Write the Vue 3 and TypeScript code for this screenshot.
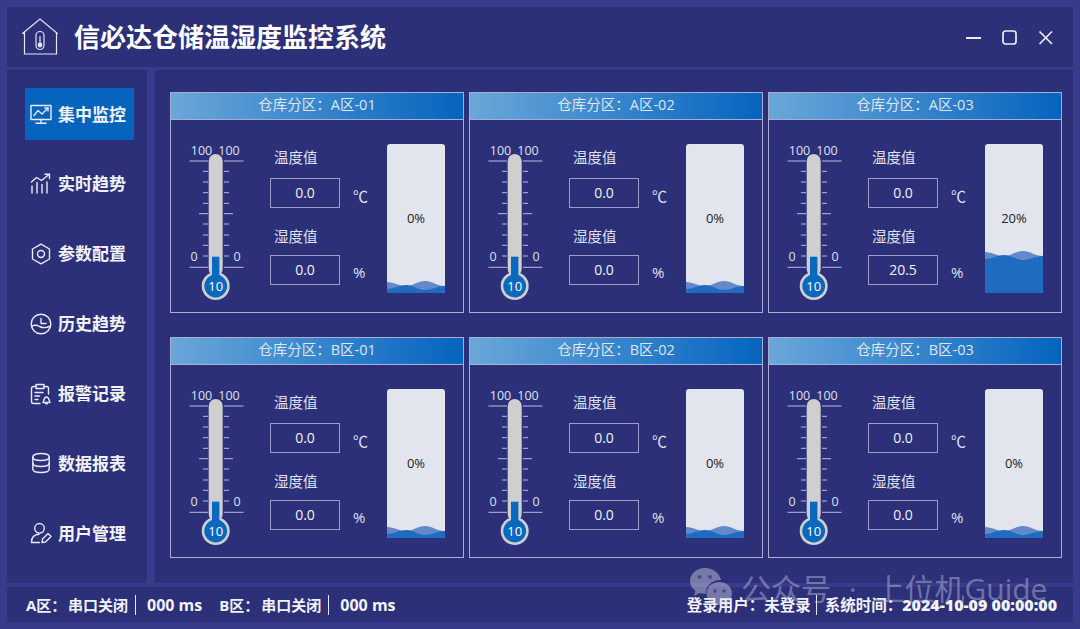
<template>
  <div class="app">
    <header class="titlebar">
      <svg class="logo" viewBox="0 0 36 37" fill="none" stroke="#e4e6f3" stroke-width="1.200">
        <path d="M.5 15.500 18 1 35.500 15.500H34.500" />
        <path d="M2.500 14V36H34.500V14" />
        <path d="M.5 15.500H2.500" />
        <rect x="14" y="13.500" width="8" height="18" rx="4" />
        <circle cx="18" cy="27" r="1.800" fill="#e4e6f3" />
        <path d="M18 26V18" />
      </svg>
      <h1 class="title">信必达仓储温湿度监控系统</h1>
      <div class="controls">
        <svg width="16" height="16" viewBox="0 0 16 16" stroke="#eceef8" stroke-width="2" fill="none"><path d="M0 8H15" /></svg>
        <svg width="16" height="16" viewBox="0 0 16 16" stroke="#eceef8" stroke-width="1.700" fill="none"><rect x="1" y="1" width="13" height="13" rx="2.500" /></svg>
        <svg width="16" height="16" viewBox="0 0 16 16" stroke="#eceef8" stroke-width="1.700" fill="none"><path d="M1.500 1.500 14 14M14 1.500 1.500 14" /></svg>
      </div>
    </header>

    <div class="middle">
      <nav class="sidebar">
        <a v-for="item in navItems" :key="item.label" class="nav-item" :class="{ active: item.active }">
          <svg class="nav-icon" viewBox="0 0 22 22" fill="none" stroke="#e8eaf6" stroke-width="1.400" stroke-linecap="round" stroke-linejoin="round">
            <path v-for="(d, i) in item.paths" :key="i" :d="d" />
          </svg>
          <span>{{ item.label }}</span>
        </a>
      </nav>

      <main class="content">
        <section v-for="card in cards" :key="card.name" class="card">
          <div class="card-head">仓库分区：{{ card.name }}</div>
          <div class="card-body">
            <svg class="thermo" width="56" height="160" viewBox="0 0 56 160">
              <g stroke="#b9bcdc" stroke-width="1">
                <line v-for="t in ticks" :key="t.y + 'l'" :x1="t.x1" :y1="t.y" x2="20" :y2="t.y" />
                <line v-for="t in ticks" :key="t.y + 'r'" x1="36" :y1="t.y" :x2="t.x2" :y2="t.y" />
              </g>
              <text x="13.500" y="13" class="scale">100</text>
              <text x="41" y="13" class="scale">100</text>
              <text x="6" y="119" class="scale">0</text>
              <text x="49" y="119" class="scale">0</text>
              <rect x="20.700" y="12" width="14" height="122" rx="7" fill="#cfcfcf" />
              <circle cx="27.700" cy="144" r="12.700" fill="#0a68bf" stroke="#cfcfcf" stroke-width="2.600" />
              <rect x="24" y="114.700" width="7.400" height="22" fill="#0a68bf" />
              <text x="27.700" y="148.600" class="bulb">10</text>
            </svg>

            <div class="fields">
              <div class="field-label">温度值</div>
              <div class="field-row">
                <div class="value-box">0.0</div>
                <span class="unit">℃</span>
              </div>
              <div class="field-label second">湿度值</div>
              <div class="field-row">
                <div class="value-box">{{ card.humidity }}</div>
                <span class="unit">%</span>
              </div>
            </div>

            <div class="tank">
              <svg class="water" width="58" height="149" viewBox="0 0 58 149" preserveAspectRatio="none">
                <path :d="backWave(card.level)" fill="#6289c9" />
                <path :d="frontWave(card.level)" fill="#1f6bbf" />
              </svg>
              <span class="percent">{{ card.level }}%</span>
            </div>
          </div>
        </section>
      </main>
    </div>

    <footer class="statusbar">
      <span class="zone">A区：</span><span>串口关闭</span>
      <i class="sep"></i>
      <span class="ms">000 ms</span>
      <span class="zone zone-b">B区：</span><span>串口关闭</span>
      <i class="sep"></i>
      <span class="ms">000 ms</span>
      <span class="user">登录用户：未登录</span>
      <i class="sep right"></i>
      <span class="clock">系统时间：<b>2024-10-09 00:00:00</b></span>
    </footer>

    <div class="watermark">
      <svg width="44" height="44" viewBox="0 0 44 44" fill="#dfe1ee">
        <path d="M16 1C7.500 1 1 6.800 1 14c0 4 2 7.400 5.400 9.800L5 29l5.600-3c1.600.5 3.200.8 5 .8.300 0 .8 0 1.200 0C16.500 18 24 12.500 32 13 30.500 6 24 1 16 1Z" />
        <path d="M30.500 15C23 15 17.500 20 17.500 26.500S23 38 30.500 38c1.500 0 2.800-.2 4-.6L39.500 40l-1.200-4.300C41.200 33.600 43 30.300 43 26.500 43 20 37.500 15 30.500 15Z" />
        <g fill="#6a6da6">
          <circle cx="10.500" cy="10" r="2" /><circle cx="21" cy="10" r="2" />
          <circle cx="26" cy="24" r="1.700" /><circle cx="35" cy="24" r="1.700" />
        </g>
      </svg>
      <span class="mark-text">公众号 · 上位机Guide</span>
    </div>
  </div>
</template>

<script setup lang="ts">
interface NavItem {
  label: string
  paths: string[]
  active?: boolean
}

const navItems: NavItem[] = [
  {
    label: '集中监控',
    active: true,
    paths: [
      'M1 2.500H21V16.500H1Z',
      'M4 12.500 8 7.500 12 11 18 5',
      'M14.800 5H18V8',
      'M11 16.500V20M6 20.300H16',
    ],
  },
  {
    label: '实时趋势',
    paths: [
      'M2 20V13M7 20V9.500M12 20V11.500M17 20V9',
      'M1.500 9 6.500 4.500 11.500 7.500 19 1.500',
      'M15 1.300H19.500V5.500',
    ],
  },
  {
    label: '参数配置',
    paths: [
      'M11 1.200 19.500 6V16L11 20.800 2.500 16V6Z',
      'M11 7.500A3.500 3.500 0 1 0 11 14.500 3.500 3.500 0 1 0 11 7.500Z',
    ],
  },
  {
    label: '历史趋势',
    paths: [
      'M11 1.200A9.800 9.800 0 1 0 11 20.800 9.800 9.800 0 1 0 11 1.200Z',
      'M11 5.500V10.500H16',
      'M1.500 13.500C4.500 11.500 7 12 9.500 13.500 12.500 15 16.500 15 20.500 13',
    ],
  },
  {
    label: '报警记录',
    paths: [
      'M6 3.500H3.500A2 2 0 0 0 1.500 5.500V18.500A2 2 0 0 0 3.500 20.500H10',
      'M14 3.500H16.500A2 2 0 0 1 18.500 5.500V11',
      'M6 1.500H14V5.500H6Z',
      'M5 9.500H13M5 13H9.500M5 16.500H8',
      'M13 19.500C14 18 13.800 14 16.500 14S19 18 20 19.500Z',
      'M15.800 20.800H17.200',
    ],
  },
  {
    label: '数据报表',
    paths: [
      'M11 1.500C6 1.500 2.800 3 2.800 5S6 8.500 11 8.500 19.200 7 19.200 5 16 1.500 11 1.500Z',
      'M2.800 5V17C2.800 19 6 20.500 11 20.500S19.200 19 19.200 17V5',
      'M2.800 11C2.800 13 6 14.500 11 14.500S19.200 13 19.200 11',
    ],
  },
  {
    label: '用户管理',
    paths: [
      'M9.500 1.500A4.800 4.800 0 1 0 9.500 11.100 4.800 4.800 0 1 0 9.500 1.500Z',
      'M1.500 20.500C1.500 15.500 4 12.500 9 12.300',
      'M1.500 20.500H9.500',
      'M12 20.500 12.500 17 18 11.500 21 14.500 15.500 20Z',
    ],
  },
]

const cards = [
  { name: 'A区-01', humidity: '0.0', level: 0 },
  { name: 'A区-02', humidity: '0.0', level: 0 },
  { name: 'A区-03', humidity: '20.5', level: 20 },
  { name: 'B区-01', humidity: '0.0', level: 0 },
  { name: 'B区-02', humidity: '0.0', level: 0 },
  { name: 'B区-03', humidity: '0.0', level: 0 },
]

// scale ticks of the thermometer
const ticks = [
  { y: 19, x1: 1.500, x2: 55.500 },
  { y: 29.300, x1: 15, x2: 41 },
  { y: 40, x1: 15, x2: 41 },
  { y: 50.700, x1: 15, x2: 41 },
  { y: 61.300, x1: 15, x2: 41 },
  { y: 71.700, x1: 11, x2: 45 },
  { y: 82, x1: 15, x2: 41 },
  { y: 93, x1: 15, x2: 41 },
  { y: 103.300, x1: 15, x2: 41 },
  { y: 114, x1: 15, x2: 41 },
  { y: 125.300, x1: 1.500, x2: 55.500 },
]

const baseY = (level: number) => 140 - level * 1.5

const backWave = (level: number) => {
  const y = baseY(level)
  return `M0 ${y - 2}C7 ${y - 2} 12 ${y + 2} 19 ${y + 2}S31 ${y - 3} 38 ${y - 3}S50 ${y + 2} 58 ${y + 2}V149H0Z`
}

const frontWave = (level: number) => {
  const y = baseY(level)
  return `M0 ${y + 5}C7 ${y + 5} 12 ${y + 1} 19 ${y + 1}S31 ${y + 6} 38 ${y + 6}S50 ${y + 2} 58 ${y + 2}V149H0Z`
}
</script>

<style>
html,
body {
  margin: 0;
  background: #383a8c;
}
</style>

<style scoped>
.app {
  position: relative;
  width: 1080px;
  height: 629px;
  box-sizing: border-box;
  padding: 7px;
  background: #383a8c;
  font-family: "Open Sans", "Noto Sans CJK SC", sans-serif;
  color: #e6e8f4;
  overflow: hidden;
}

.titlebar {
  display: flex;
  align-items: center;
  width: 1066px;
  height: 60px;
  padding-left: 15px;
  box-sizing: border-box;
  background: #2c3078;
}

.logo {
  width: 36px;
  height: 37px;
  margin-bottom: 1px;
}

.title {
  margin: 0 0 3px 16px;
  font-size: 26px;
  font-weight: 700;
  color: #fff;
}

.controls {
  display: flex;
  gap: 20px;
  margin: 2px 19px 0 auto;
}

.middle {
  display: flex;
  gap: 8px;
  margin-top: 3px;
  height: 513px;
}

.sidebar {
  width: 140px;
  box-sizing: border-box;
  padding: 18px 13px 0 18px;
  display: flex;
  flex-direction: column;
  gap: 17.900px;
  background: #2c3078;
}

.nav-item {
  display: flex;
  align-items: center;
  gap: 6px;
  height: 52px;
  flex: none;
  padding-left: 5px;
  font-size: 17px;
  font-weight: 700;
  color: #f1f2fa;
}

.nav-item span {
  padding-bottom: 2px;
}

.nav-item.active {
  background: #0664bd;
}

.nav-icon {
  width: 22px;
  height: 22px;
  flex: none;
}

.content {
  width: 918px;
  box-sizing: border-box;
  padding: 22px 11px 25px 15px;
  display: grid;
  grid-template-columns: repeat(3, 294px);
  grid-template-rows: repeat(2, 221px);
  column-gap: 5px;
  row-gap: 24px;
  background: #2c3078;
}

.card {
  box-sizing: border-box;
  border: 1px solid #a9add4;
  background: #2c3078;
}

.card-head {
  height: 26px;
  line-height: 23px;
  text-align: center;
  font-size: 14.500px;
  color: #dfe6f5;
  background: linear-gradient(90deg, #6aa7d9, #0564bf);
  border-bottom: 1px solid #a9add4;
}

.card-body {
  display: flex;
  align-items: flex-start;
  padding: 22px 18px 0 17px;
}

.thermo {
  flex: none;
}

.scale {
  fill: #dfe1f0;
  font-size: 12.500px;
  text-anchor: middle;
}

.bulb {
  fill: #fff;
  font-size: 13px;
  text-anchor: middle;
}

.fields {
  margin: 5px 0 0 26px;
}

.field-label {
  height: 22px;
  line-height: 22px;
  margin-left: 4px;
  font-size: 14.500px;
  color: #dfe1f0;
}

.field-label.second {
  margin-top: 18px;
}

.field-row {
  display: flex;
  align-items: center;
  margin-top: 9px;
}

.field-label.second + .field-row {
  margin-top: 7px;
}

.value-box {
  width: 70px;
  height: 30px;
  box-sizing: border-box;
  border: 1px solid #9a9ecb;
  line-height: 28px;
  text-align: center;
  font-size: 14px;
  color: #f1f2fa;
}

.unit {
  margin: 4px 0 0 13px;
  font-size: 15px;
  color: #dfe1f0;
}

.tank {
  position: relative;
  display: flex;
  align-items: center;
  justify-content: center;
  flex: none;
  width: 58px;
  height: 149px;
  margin: 2px 0 0 auto;
  border-radius: 3px;
  overflow: hidden;
  background: #e3e5ee;
}

.water {
  position: absolute;
  inset: 0;
}

.percent {
  position: relative;
  margin-bottom: 2px;
  font-size: 13px;
  color: #222;
}

.statusbar {
  display: flex;
  align-items: center;
  width: 1066px;
  height: 35px;
  margin-top: 4px;
  box-sizing: border-box;
  padding: 0 16px 0 19px;
  background: #2c3078;
  font-size: 15px;
  font-weight: 700;
  color: #f1f2fa;
  white-space: nowrap;
}

.zone {
  width: 42px;
}

.sep {
  width: 1px;
  height: 20px;
  margin: 0 7px;
  background: #e6e8f4;
}

.sep.right {
  margin: 0 8px 0 5px;
}

.ms {
  margin-left: 4px;
  font-size: 16px;
}

.zone-b {
  margin-left: 17px;
}

.user {
  margin-left: auto;
  font-size: 15.500px;
}

.clock {
  font-size: 15.500px;
}

.clock b {
  font-size: 16px;
}

.watermark {
  position: absolute;
  left: 689px;
  top: 567px;
  display: flex;
  align-items: center;
  gap: 8px;
  height: 44px;
  opacity: 0.42;
  font-size: 30px;
  color: #c9cbe6;
  white-space: nowrap;
  pointer-events: none;
}

.mark-text {
  word-spacing: 10px;
  margin-bottom: 4px;
}
</style>
